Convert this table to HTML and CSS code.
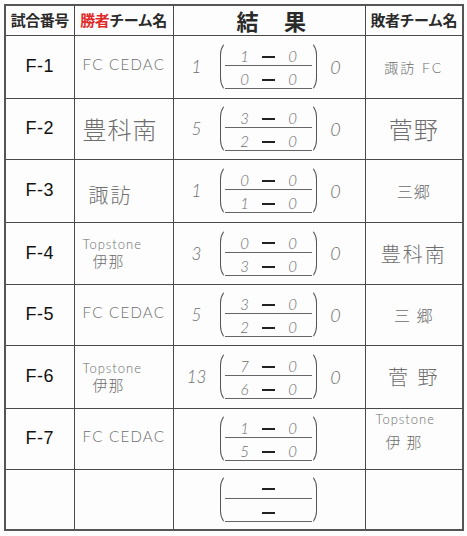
FILE: index.html
```html
<!DOCTYPE html>
<html lang="ja">
<head>
<meta charset="utf-8">
<link rel="stylesheet" href="styles.css">
</head>
<body>
<table class="sheet">
  <colgroup>
    <col class="c-no"><col class="c-win"><col class="c-res"><col class="c-lose">
  </colgroup>
  <thead>
    <tr class="head">
      <th>試合番号</th>
      <th><span class="red">勝者</span>チーム名</th>
      <th class="h-res"><span>結</span><span>果</span></th>
      <th>敗者チーム名</th>
    </tr>
  </thead>
  <tbody>
    <tr class="r1">
      <td class="no">F-1</td>
      <td class="win hw lat">FC CEDAC</td>
      <td><div class="res"><span class="ws hw">1</span><div class="br"><div class="ln"><span class="d">1</span><span class="dash"></span><span class="d">0</span></div><div class="ln"><span class="d">0</span><span class="dash"></span><span class="d">0</span></div></div><span class="ls hw">0</span></div></td>
      <td class="lose hw sm">諏訪 FC</td>
    </tr>
    <tr class="r2">
      <td class="no">F-2</td>
      <td class="win hw big">豊科南</td>
      <td><div class="res"><span class="ws hw">5</span><div class="br"><div class="ln"><span class="d">3</span><span class="dash"></span><span class="d">0</span></div><div class="ln"><span class="d">2</span><span class="dash"></span><span class="d">0</span></div></div><span class="ls hw">0</span></div></td>
      <td class="lose hw big">菅野</td>
    </tr>
    <tr class="r3">
      <td class="no">F-3</td>
      <td class="win hw mid low">諏訪</td>
      <td><div class="res"><span class="ws hw">1</span><div class="br"><div class="ln"><span class="d">0</span><span class="dash"></span><span class="d">0</span></div><div class="ln"><span class="d">1</span><span class="dash"></span><span class="d">0</span></div></div><span class="ls hw">0</span></div></td>
      <td class="lose hw md2">三郷</td>
    </tr>
    <tr class="r4">
      <td class="no">F-4</td>
      <td class="win hw two"><div>Topstone</div><div class="ina">伊那</div></td>
      <td><div class="res"><span class="ws hw">3</span><div class="br"><div class="ln"><span class="d">0</span><span class="dash"></span><span class="d">0</span></div><div class="ln"><span class="d">3</span><span class="dash"></span><span class="d">0</span></div></div><span class="ls hw">0</span></div></td>
      <td class="lose hw mid">豊科南</td>
    </tr>
    <tr class="r5">
      <td class="no">F-5</td>
      <td class="win hw lat">FC CEDAC</td>
      <td><div class="res"><span class="ws hw">5</span><div class="br"><div class="ln"><span class="d">3</span><span class="dash"></span><span class="d">0</span></div><div class="ln"><span class="d">2</span><span class="dash"></span><span class="d">0</span></div></div><span class="ls hw">0</span></div></td>
      <td class="lose hw md2">三 郷</td>
    </tr>
    <tr class="r6">
      <td class="no">F-6</td>
      <td class="win hw two"><div>Topstone</div><div class="ina">伊那</div></td>
      <td><div class="res"><span class="ws hw">13</span><div class="br"><div class="ln"><span class="d">7</span><span class="dash"></span><span class="d">0</span></div><div class="ln"><span class="d">6</span><span class="dash"></span><span class="d">0</span></div></div><span class="ls hw">0</span></div></td>
      <td class="lose hw mid">菅 野</td>
    </tr>
    <tr class="r7">
      <td class="no">F-7</td>
      <td class="win hw lat">FC CEDAC</td>
      <td><div class="res"><span class="ws hw"></span><div class="br"><div class="ln"><span class="d">1</span><span class="dash"></span><span class="d">0</span></div><div class="ln"><span class="d">5</span><span class="dash"></span><span class="d">0</span></div></div><span class="ls hw"></span></div></td>
      <td class="lose hw two top"><div>Topstone</div><div class="ina">伊 那</div></td>
    </tr>
    <tr class="r8">
      <td class="no"></td>
      <td class="win"></td>
      <td><div class="res"><span class="ws"></span><div class="br"><div class="ln"><span class="d"></span><span class="dash"></span><span class="d"></span></div><div class="ln"><span class="d"></span><span class="dash"></span><span class="d"></span></div></div><span class="ls"></span></div></td>
      <td class="lose"></td>
    </tr>
  </tbody>
</table>
</body>
</html>
```

FILE: styles.css
```css
html, body {
  margin: 0;
  padding: 0;
  background: #fdfdfd;
}
body {
  padding: 4px 0 0 4px;
  font-family: "Noto Sans CJK JP", "Liberation Sans", sans-serif;
}
.sheet {
  border-collapse: collapse;
  table-layout: fixed;
  width: 458px;
  border: 2px solid #555;
}
.c-no { width: 69px; }
.c-win { width: 99px; }
.c-res { width: 192px; }
.c-lose { width: 98px; }

.sheet th, .sheet td {
  border: 1.5px solid #4a4a4a;
  padding: 0;
  vertical-align: middle;
}
.head { height: 30px; }
.head th {
  font-size: 15px;
  line-height: 26px;
  font-weight: 600;
  color: #2a2a2a;
  white-space: nowrap;
  letter-spacing: -0.5px;
  text-align: center;
}
.red { color: #e02a2a; }
.h-res span {
  display: inline-block;
  font-size: 22px;
  line-height: 26px;
  font-weight: 600;
  vertical-align: top;
}
.h-res span:first-child { margin-left: 4px; }
.h-res span:last-child { margin-left: 26px; }
.r1 { height: 63px; }
.r2 { height: 61px; }
.r3 { height: 63px; }
.r4 { height: 62px; }
.r5 { height: 61px; }
.r6 { height: 63px; }
.r7 { height: 61px; }
.r8 { height: 61px; }

.no {
  text-align: center;
  font-family: "Liberation Sans", sans-serif;
  font-size: 18px;
  color: #111;
  letter-spacing: 0.5px;
}
.hw {
  font-family: "Lato", "Noto Sans CJK JP", sans-serif;
  font-weight: 300;
  color: #6e6e6e;
}
.win {
  padding-left: 8px !important;
  white-space: nowrap;
}
.lat {
  font-size: 15px;
  letter-spacing: 1.3px;
  padding-bottom: 6px !important;
}
.big { font-size: 24px; letter-spacing: 1px; }
.mid { font-size: 20px; letter-spacing: 2px; }
.md2 { font-size: 16px; letter-spacing: 1px; }
.sm { font-size: 14px; letter-spacing: 2px; }
.low { padding-top: 8px !important; padding-left: 14px !important; }
.two { font-size: 13px; line-height: 17px; letter-spacing: 1px; }
.two .ina { font-size: 15px; padding-left: 10px; }
.lose { text-align: center; white-space: nowrap; }
.lose.two { text-align: left; padding-left: 10px !important; }
.top { vertical-align: top !important; padding-top: 2px !important; }
.top .ina { padding-top: 6px; }

.res {
  display: flex;
  align-items: center;
}
.ws {
  width: 46px;
  text-align: center;
  font-size: 17px;
  font-style: italic;
}
.ls {
  width: 38px;
  text-align: center;
  font-size: 18px;
  font-style: italic;
}
.br {
  width: 97px;
  height: 51px;
  box-sizing: border-box;
  border: 1.5px solid #555;
  border-top-color: transparent;
  border-bottom-color: transparent;
  border-radius: 10px / 14px;
  padding: 0 4px;
}
.ln {
  display: grid;
  grid-template-columns: 28px 20px 28px;
  padding-left: 6px;
  align-items: end;
  height: 22px;
  border-bottom: 1.5px solid #666;
}
.ln:first-child { height: 23px; }
.d {
  text-align: center;
  font-family: "Lato", sans-serif;
  font-weight: 300;
  font-style: italic;
  font-size: 15px;
  line-height: 17px;
  color: #6e6e6e;
}
.dash {
  justify-self: center;
  align-self: center;
  margin-top: 6px;
  width: 13px;
  height: 2px;
  background: #222;
}
```
